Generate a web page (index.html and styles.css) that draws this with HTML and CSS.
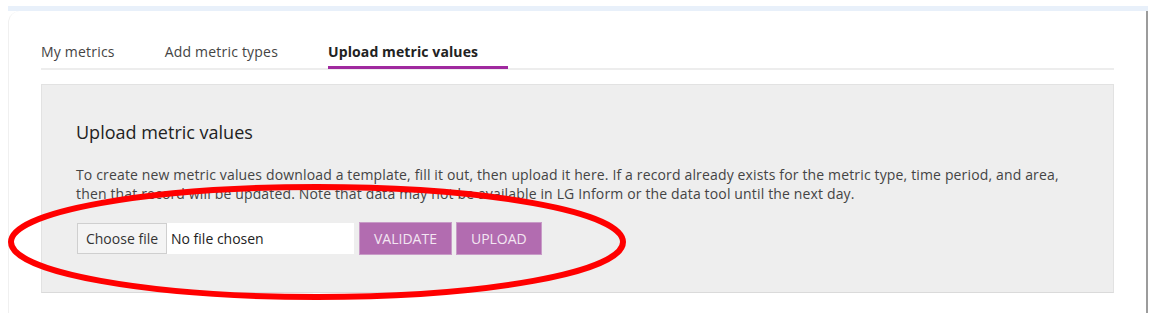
FILE: index.html
```html
<!DOCTYPE html>
<html lang="en">
<head>
    <meta charset="UTF-8">
    <title>Upload metric values</title>
    <link rel="stylesheet" href="styles.css">
</head>
<body>
    <div class="page">
        <div class="frame">
            <div class="card">
                <ul class="tabs">
                    <li class="tab">My metrics</li>
                    <li class="tab">Add metric types</li>
                    <li class="tab active">Upload metric values</li>
                </ul>
                <div class="panel">
                    <h2 class="panel-title">Upload metric values</h2>
                    <p class="panel-text">To create new metric values download a template, fill it out, then upload it here. If a record already exists for the metric type, time period, and area, then that record will be updated. Note that data may not be available in LG Inform or the data tool until the next day.</p>
                    <div class="upload-row">
                        <label class="file-input">
                            <span class="file-button">Choose file</span>
                            <span class="file-name">No file chosen</span>
                        </label>
                        <button class="button">Validate</button>
                        <button class="button">Upload</button>
                    </div>
                </div>
            </div>
        </div>
    </div>
    <!-- red marker round the upload controls -->
    <svg class="marker" width="1150" height="313" viewBox="0 0 1150 313">
        <ellipse cx="317" cy="242" rx="306" ry="55" fill="none" stroke="#ff0000" stroke-width="6"/>
    </svg>
</body>
</html>
```

FILE: styles.css
```css
/* global */
body {
    margin: 0;
    font-family: "Open Sans", "Noto Sans", Arial, sans-serif;
    background: #ffffff;
    color: #333;
}

.page {
    padding: 6px 2px 0 8px;
}

.frame {
    border-top: 5px solid #e8f0fa;
}

/* white card */
.card {
    height: 302px;
    box-sizing: border-box;
    padding: 31px 32px 0 32px;
    border-left: 1px solid #f0f0f0;
    border-right: 2px solid #9c9c9c;
    border-top-left-radius: 12px;
    background: #fff;
}

/* tabs */
.tabs {
    display: flex;
    margin: 0;
    padding: 0;
    list-style: none;
    border-bottom: 2px solid #ededed;
}

.tab {
    margin-right: 20px;
    padding: 0 30px 4px 0;
    font-size: 14px;
    line-height: 20px;
    letter-spacing: 0.2px;
    color: #444;
    border-bottom: 3px solid transparent;
    margin-bottom: -1px;
}

.tab.active {
    font-weight: 700;
    letter-spacing: 0.1px;
    color: #222;
    border-bottom-color: #a0299f;
}

/* grey panel */
.panel {
    margin-top: 14px;
    padding: 34px 34px 37px 34px;
    background: #eeeeee;
    border: 1px solid #e2e2e2;
    border-bottom-color: #dadada;
}

.panel-title {
    margin: 0 0 20px 0;
    font-size: 18px;
    font-weight: 400;
    line-height: 26px;
    color: #222;
}

.panel-text {
    margin: 0 0 19px 0;
    font-size: 14px;
    line-height: 19px;
    letter-spacing: 0.15px;
    color: #444;
}

/* upload controls */
.upload-row {
    display: flex;
    align-items: center;
}

.file-input {
    display: flex;
    height: 31px;
    margin-left: 1px;
    margin-right: 5px;
    background: #fff;
}

.file-button {
    width: 90px;
    box-sizing: border-box;
    display: flex;
    align-items: center;
    justify-content: center;
    border: 1px solid #cfcfcf;
    background: #f4f4f4;
    font-size: 14px;
    color: #333;
}

.file-name {
    width: 187px;
    display: flex;
    align-items: center;
    padding-left: 4px;
    box-sizing: border-box;
    font-size: 14px;
    color: #222;
}

.button {
    height: 33px;
    margin-right: 4px;
    padding: 0 14px;
    border: 1px solid #c89bc7;
    background: #b26cb0;
    color: #f3e6f2;
    font-family: inherit;
    font-size: 14px;
    text-transform: uppercase;
    cursor: pointer;
}

.marker {
    position: absolute;
    top: 0;
    left: 0;
    pointer-events: none;
}
```
